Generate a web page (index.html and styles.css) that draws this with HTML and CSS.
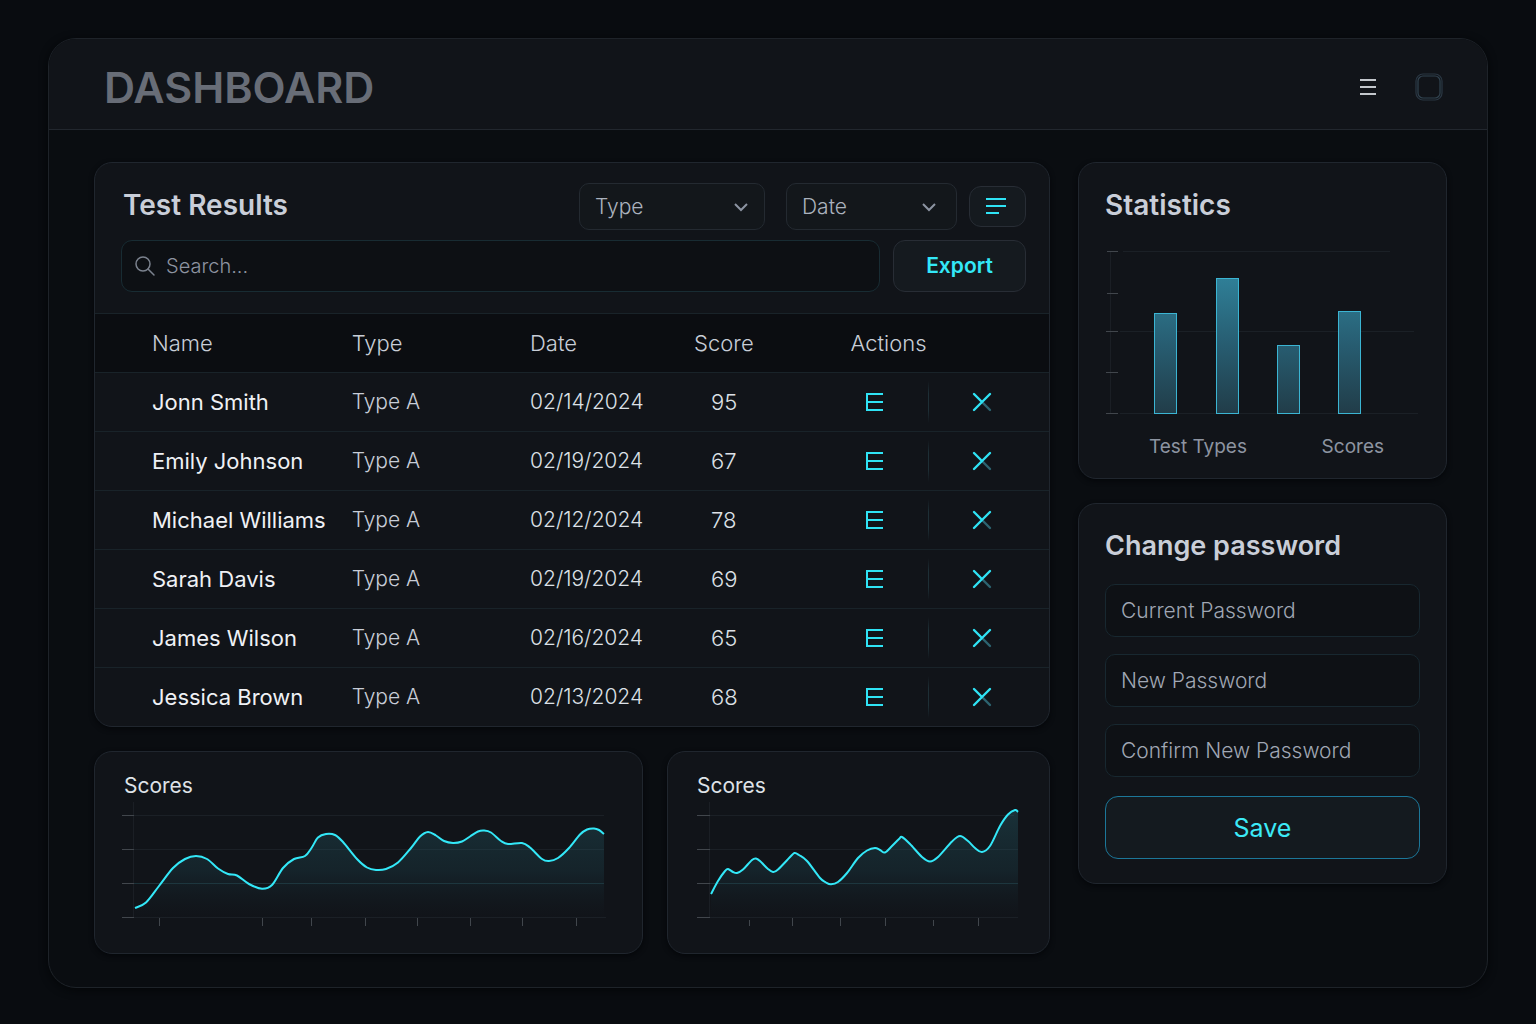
FILE: index.html
```html
<!DOCTYPE html>
<html lang="en">
<head>
<meta charset="utf-8">
<meta name="viewport" content="width=device-width, initial-scale=1">
<title>Dashboard</title>
<link rel="stylesheet" href="styles.css">
</head>
<body>
<svg class="defs" aria-hidden="true">
  <defs>
    <linearGradient id="area" x1="0" y1="0" x2="0" y2="118" gradientUnits="userSpaceOnUse">
      <stop offset="0" stop-color="#2f7f8c" stop-opacity=".3"/>
      <stop offset=".6" stop-color="#25616f" stop-opacity=".2"/>
      <stop offset="1" stop-color="#1c3a48" stop-opacity="0"/>
    </linearGradient>
    <linearGradient id="bar" x1="0" y1="29" x2="0" y2="165" gradientUnits="userSpaceOnUse">
      <stop offset="0" stop-color="#2f7f97"/>
      <stop offset=".5" stop-color="#275c70"/>
      <stop offset="1" stop-color="#213c48"/>
    </linearGradient>
    <symbol id="edit" viewBox="0 0 20 20">
      <path d="M19 2H3v16h16M3 10h16" fill="none" stroke="#2fe3f5" stroke-width="2"/>
    </symbol>
    <symbol id="remove" viewBox="0 0 20 20">
      <path d="M10 10l8 8" stroke="#2d6470" stroke-width="2.4" stroke-linecap="round"/>
      <path d="M2 2l8 8M18 2L2 18" stroke="#2fe3f5" stroke-width="2.4" stroke-linecap="round"/>
    </symbol>
  </defs>
</svg>

<div class="app">
  <header class="topbar">
    <h1 class="brand">DASHBOARD</h1>
    <div class="topbar-actions">
      <button class="plain" type="button" aria-label="Menu">
        <svg width="18" height="20" viewBox="0 0 18 20"><path d="M1 3h16M1 10h16M1 17h16" stroke="#c3c7cc" stroke-width="2"/></svg>
      </button>
      <button class="plain" type="button" aria-label="Window">
        <svg width="28" height="28" viewBox="0 0 28 28" fill="none"><rect x="1" y="1" width="26" height="26" rx="7" stroke="#2a3743" stroke-width="1.2"/><rect x="3" y="3" width="22" height="22" rx="5" stroke="#314350" stroke-width="1.2"/></svg>
      </button>
    </div>
  </header>

  <main class="content">
    <div class="column">
      <section class="card">
        <div class="tools">
          <div class="tools-row">
            <h2 class="title">Test Results</h2>
            <div class="select select-type">
              <select aria-label="Type"><option>Type</option></select>
              <svg class="chevron" width="16" height="10" viewBox="0 0 16 10"><path d="M2 2l6 6 6-6"/></svg>
            </div>
            <div class="select select-date">
              <select aria-label="Date"><option>Date</option></select>
              <svg class="chevron" width="16" height="10" viewBox="0 0 16 10"><path d="M2 2l6 6 6-6"/></svg>
            </div>
            <button class="button list-button" type="button" aria-label="List options">
              <svg width="22" height="18" viewBox="0 0 22 18"><path d="M1 2h20M1 9h20M1 16h13" stroke="#2fe3f5" stroke-width="2"/></svg>
            </button>
          </div>
          <div class="search-row">
            <label class="search">
              <svg width="22" height="22" viewBox="0 0 22 22" fill="none" stroke="#7b828e" stroke-width="1.5" stroke-linecap="round"><circle cx="9" cy="9" r="7"/><path d="M14 14l6 6"/></svg>
              <input type="search" placeholder="Search..." aria-label="Search">
            </label>
            <button class="button export" type="button">Export</button>
          </div>
        </div>
        <table class="results">
          <colgroup><col class="c-name"><col class="c-type"><col class="c-date"><col class="c-score"><col class="c-edit"><col></colgroup>
          <thead>
            <tr><th>Name</th><th>Type</th><th>Date</th><th>Score</th><th colspan="2">Actions</th></tr>
          </thead>
          <tbody>
            <tr><td>Jonn Smith</td><td>Type A</td><td>02/14/2024</td><td>95</td><td><button class="plain" type="button" aria-label="Edit"><svg width="20" height="20"><use href="#edit"/></svg></button></td><td><button class="plain" type="button" aria-label="Delete"><svg width="20" height="20"><use href="#remove"/></svg></button></td></tr>
            <tr><td>Emily Johnson</td><td>Type A</td><td>02/19/2024</td><td>67</td><td><button class="plain" type="button" aria-label="Edit"><svg width="20" height="20"><use href="#edit"/></svg></button></td><td><button class="plain" type="button" aria-label="Delete"><svg width="20" height="20"><use href="#remove"/></svg></button></td></tr>
            <tr><td>Michael Williams</td><td>Type A</td><td>02/12/2024</td><td>78</td><td><button class="plain" type="button" aria-label="Edit"><svg width="20" height="20"><use href="#edit"/></svg></button></td><td><button class="plain" type="button" aria-label="Delete"><svg width="20" height="20"><use href="#remove"/></svg></button></td></tr>
            <tr><td>Sarah Davis</td><td>Type A</td><td>02/19/2024</td><td>69</td><td><button class="plain" type="button" aria-label="Edit"><svg width="20" height="20"><use href="#edit"/></svg></button></td><td><button class="plain" type="button" aria-label="Delete"><svg width="20" height="20"><use href="#remove"/></svg></button></td></tr>
            <tr><td>James Wilson</td><td>Type A</td><td>02/16/2024</td><td>65</td><td><button class="plain" type="button" aria-label="Edit"><svg width="20" height="20"><use href="#edit"/></svg></button></td><td><button class="plain" type="button" aria-label="Delete"><svg width="20" height="20"><use href="#remove"/></svg></button></td></tr>
            <tr><td>Jessica Brown</td><td>Type A</td><td>02/13/2024</td><td>68</td><td><button class="plain" type="button" aria-label="Edit"><svg width="20" height="20"><use href="#edit"/></svg></button></td><td><button class="plain" type="button" aria-label="Delete"><svg width="20" height="20"><use href="#remove"/></svg></button></td></tr>
          </tbody>
        </table>
      </section>

      <div class="charts">
        <section class="card trend">
          <h3 class="subtitle">Scores</h3>
          <svg class="chart" viewBox="0 0 495 130" role="img" aria-label="Scores over time">
            <path class="axis" d="M12.5 2V118"/>
            <path class="grid" d="M13 15.5H483M13 49.5H483M13 117.5H485"/>
            <path class="grid grid-accent" d="M13 83.5H483"/>
            <path class="tick" d="M1 15.5H13M1 49.5H13M1 83.5H13M1 117.5H13M38.5 118V126M141.5 118V126M190.5 118V126M244.5 118V126M296.5 118V126M349.5 118V126M401.5 118V126M455.5 118V126"/>
            <g class="series" data-base="118" data-points="14,108 25,102.5 38,86 52,68 64,59 75,56 86,59 97,68.5 107,74 116,75.5 128,84 141,88.8 151,85 162,68 173,59 184,56 190.5,48 197,37.5 205,34 214,35 222,42 236,59 246,67.5 255,70 265,69 277,62.5 290,48 299,36.5 307,32 315,35.5 323,41 332,43 341,41.5 349,36.5 357,31.5 363,30.5 370,32.5 380,41 387,44 401,43 409,47.5 421,59 428,61 437,58 448,48 459,34.5 466,29.5 473,28.5 478,30 483,34"></g>
          </svg>
        </section>
        <section class="card trend">
          <h3 class="subtitle">Scores</h3>
          <svg class="chart" viewBox="0 0 329 130" role="img" aria-label="Scores over time">
            <path class="axis" d="M15.5 2V118"/>
            <path class="grid" d="M16 15.5H320M16 49.5H324M16 117.5H324"/>
            <path class="grid grid-accent" d="M16 83.5H324"/>
            <path class="tick" d="M3 15.5H16M3 49.5H16M3 83.5H16M3 117.5H16M55.5 120V126M98.5 118V126M146.5 118V126M191.5 118V126M239.5 120V126M284.5 118V126"/>
            <g class="series" data-base="118" data-points="17,94 24,81 31,71 34,69 39,72 43,73 49,69.5 58,60 62,58.5 66,61 74,69 79,72 84,69.5 98,55 101,53 105,55 113,61 126,78 132,82.5 137,84.3 144,82 153,73 164,58 173,50.5 181,48 186,50 191,52.5 197,47 205,39 208,37 216,44 228,57 236,61.5 244,57 258,41.5 266,36 274,41 281,48 288,52 296,46 306,26 314,14.5 321,10 324,12"></g>
          </svg>
        </section>
      </div>
    </div>

    <div class="column">
      <section class="card stats">
        <h2 class="title">Statistics</h2>
        <svg class="chart" viewBox="0 0 315 166" role="img" aria-label="Test types and scores">
          <path class="axis" d="M5.5 3V165"/>
          <path class="grid" d="M18 2.5H285M15 82.5H309M15 164.5H313"/>
          <path class="tick" d="M2 2.5H13M2 44.5H13M1 82.5H13M1 123.5H13M1 164.5H13"/>
          <g class="bars">
            <rect x="49.5" y="64.5" width="22" height="100"/>
            <rect x="111.5" y="29.5" width="22" height="135"/>
            <rect x="172.5" y="96.5" width="22" height="68"/>
            <rect x="233.5" y="62.5" width="22" height="102"/>
          </g>
        </svg>
        <div class="legend"><span>Test Types</span><span>Scores</span></div>
      </section>

      <section class="card account">
        <h2 class="title">Change password</h2>
        <form class="form">
          <input class="field" type="password" placeholder="Current Password" aria-label="Current Password">
          <input class="field" type="password" placeholder="New Password" aria-label="New Password">
          <input class="field" type="password" placeholder="Confirm New Password" aria-label="Confirm New Password">
          <button class="save" type="button">Save</button>
        </form>
      </section>
    </div>
  </main>
</div>
<script src="charts.js"></script>
</body>
</html>
```
FILE: styles.css
```css
:root {
  --accent: #33e8f8;
  --line: #20262e;
  --line-teal: #182830;
  --text: #eff1f5;
  --text-soft: #c8cdd7;
  --text-dim: #8d94a1;
}

* { box-sizing: border-box; }

body {
  margin: 0;
  min-height: 100vh;
  padding: 38px 48px 36px;
  background: #090c10;
  color: var(--text);
  font-family: Inter, "Liberation Sans", sans-serif;
  font-size: 22px;
  line-height: 28px;
}

h1, h2, h3 { margin: 0; }
button, input, select { font: inherit; color: inherit; }
button { cursor: pointer; }
svg { display: block; }

.defs { position: absolute; width: 0; height: 0; }

.app {
  border: 1px solid #1e2329;
  border-radius: 28px;
  background: #0a0d11;
  overflow: hidden;
  box-shadow: 0 2px 8px #040608;
}

.topbar {
  display: flex;
  align-items: center;
  justify-content: space-between;
  height: 91px;
  padding: 6px 44px 0 55px;
  border-bottom: 1px solid #22272e;
  background: #111419;
}

.brand {
  color: #686d77;
  font-size: 43px;
  font-weight: 600;
  line-height: 56px;
}

.topbar-actions { display: flex; align-items: center; gap: 38px; }

.plain {
  display: block;
  padding: 0;
  border: 0;
  background: none;
}

.content {
  display: grid;
  grid-template-columns: 956fr 369fr;
  align-items: start;
  gap: 28px;
  padding: 32px 40px 33px 45px;
}

.column { display: grid; gap: 24px; min-width: 0; }

.card {
  min-width: 0;
  border: 1px solid var(--line);
  border-radius: 18px;
  background: #111419;
  overflow: hidden;
  box-shadow: 0 2px 5px #05070a;
}

.title {
  color: #c9ced8;
  font-size: 28px;
  font-weight: 600;
  line-height: 36px;
}

.tools {
  display: grid;
  gap: 10px;
  padding: 20px 23px 21px 26px;
}

.tools-row { display: flex; align-items: center; }
.tools-row .title { margin-right: auto; padding: 0 0 4px 2px; }

.select { position: relative; }
.select-type { width: 186px; margin-right: 21px; }
.select-date { width: 171px; margin-right: 12px; }

.select select {
  display: block;
  width: 100%;
  height: 47px;
  padding: 0 15px;
  border: 1px solid #242a31;
  border-radius: 10px;
  background: #13171b;
  color: #abb2be;
  font-size: 21px;
  font-weight: 300;
  appearance: none;
}

.chevron {
  position: absolute;
  top: 19px;
  right: 16px;
  fill: none;
  stroke: #8c94a2;
  stroke-width: 2;
  pointer-events: none;
}
.select-date .chevron { right: 20px; }

.button {
  border: 1px solid #282d35;
  border-radius: 12px;
  background: #151a1f;
}

.list-button {
  display: grid;
  place-items: center;
  width: 57px;
  height: 41px;
  padding: 0 4px 2px 0;
}

.search-row { display: flex; gap: 13px; }

.search {
  display: flex;
  flex: 1;
  align-items: center;
  gap: 10px;
  height: 52px;
  padding: 0 12px;
  border: 1px solid #182c33;
  border-radius: 11px;
  background: #0d1014;
}

.search input {
  flex: 1;
  min-width: 0;
  padding: 0;
  border: 0;
  outline: 0;
  background: none;
  font-size: 20px;
  font-weight: 300;
}

::placeholder { color: var(--text-dim); opacity: 1; }

.export {
  width: 133px;
  height: 52px;
  padding: 0;
  color: var(--accent);
  font-size: 21px;
  font-weight: 600;
}

.results {
  width: 100%;
  table-layout: fixed;
  border-spacing: 0;
}

.c-name { width: 26.9%; }
.c-type { width: 18.7%; }
.c-date { width: 17.2%; }
.c-score { width: 16.4%; }
.c-edit { width: 8.1%; }

.results th, .results td {
  height: 59px;
  padding: 0;
  border-top: 1px solid #192329;
  text-align: left;
  font-weight: 300;
  white-space: nowrap;
}

.results th { background: #0b0d11; color: var(--text-soft); }
.results td { color: var(--text-soft); font-size: 21px; }
.results tr > :first-child { padding-left: 57px; }
.results td:first-child { color: var(--text); font-size: 22px; font-weight: 400; }
.results td:nth-child(3) { color: #dde1e7; }
.results td:nth-child(4) { padding-left: 17px; color: #dde1e7; font-size: 22px; }
.results td:nth-child(5) { padding-left: 13px; }
.results td:nth-child(6) {
  padding-left: 44px;
  background: linear-gradient(transparent, #1e2f36 30%, #1e2f36 70%, transparent) left center / 1px 42px no-repeat;
}

.charts {
  display: grid;
  grid-template-columns: 549fr 383fr;
  gap: 24px;
}

.trend { padding: 19px 26px 23px; }

.subtitle {
  padding: 0 3px;
  color: #dfe3e8;
  font-size: 21px;
  font-weight: 400;
  line-height: 29px;
}

.chart { width: 100%; height: auto; }
.chart path { fill: none; }
.chart .axis { stroke: #1b1f25; }
.chart .grid { stroke: #1b2026; }
.chart .grid-accent { stroke: #1c3138; }
.chart .tick { stroke: #41464c; }
.chart .line { stroke: var(--accent); stroke-width: 2; }
.chart .area { fill: url(#area); }

.bars rect { fill: url(#bar); stroke: #3bb5d3; }

.stats { padding: 24px 26px 17px; }
.stats .chart { margin: 26px 0 18px; }

.legend {
  display: flex;
  justify-content: space-between;
  padding: 0 36px 0 44px;
  color: var(--text-dim);
  font-size: 19px;
}

.account { padding: 24px 26px; }
.account .title { font-size: 27px; }

.form { display: grid; gap: 17px; margin-top: 20px; }

.field {
  width: 100%;
  height: 53px;
  padding: 0 15px;
  border: 1px solid var(--line-teal);
  border-radius: 10px;
  outline: 0;
  background: #0e1115;
  font-size: 21px;
  font-weight: 300;
}
.field::placeholder { color: #a0a7b4; }

.save {
  height: 63px;
  margin-top: 2px;
  padding: 0;
  border: 1px solid #1c7799;
  border-radius: 13px;
  background: #141a1f;
  color: #3ceaf7;
  font-size: 25px;
}
```
FILE: charts.js
```js
// Draws each series as a smooth curve through its points, with a filled area below.
const SVG_NS = "http://www.w3.org/2000/svg";

function addPath(parent, className, d) {
  const path = document.createElementNS(SVG_NS, "path");
  path.setAttribute("class", className);
  path.setAttribute("d", d);
  parent.appendChild(path);
}

document.querySelectorAll(".series").forEach((series) => {
  const points = series.dataset.points.split(" ").map((p) => p.split(",").map(Number));
  const first = points[0];
  const last = points[points.length - 1];
  let d = `M${first}`;
  for (let i = 0; i < points.length - 1; i++) {
    const before = points[i - 1] || points[i];
    const a = points[i];
    const b = points[i + 1];
    const after = points[i + 2] || b;
    const c1 = [a[0] + (b[0] - before[0]) / 6, a[1] + (b[1] - before[1]) / 6];
    const c2 = [b[0] - (after[0] - a[0]) / 6, b[1] - (after[1] - a[1]) / 6];
    d += `C${c1} ${c2} ${b}`;
  }
  addPath(series, "area", `${d}L${last[0]} ${series.dataset.base}L${first[0]} ${series.dataset.base}Z`);
  addPath(series, "line", d);
});
```
